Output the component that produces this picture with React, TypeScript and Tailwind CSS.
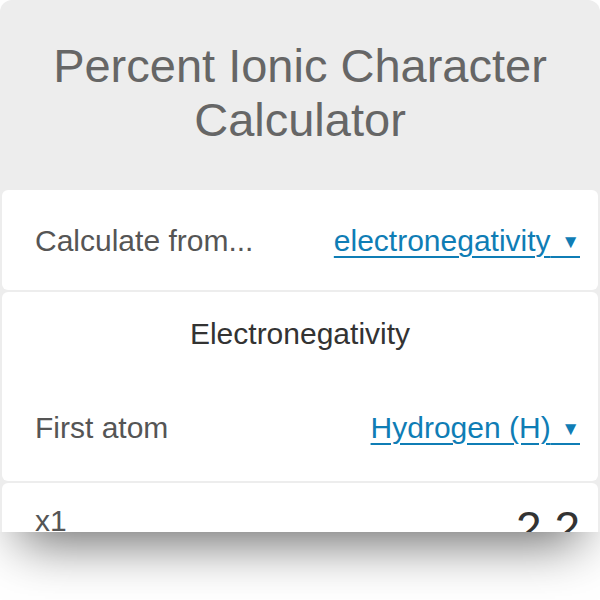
const Caret = () => <span className="text-[19px] align-[3px]">{"\u00a0\u00a0▼"}</span>;

const App = () => {
    return (
        <div className="w-[600px] h-[600px] bg-white overflow-hidden font-['Liberation_Sans',Arial,sans-serif]">
            <div className="relative h-[532px] overflow-hidden rounded-t-[12px] bg-[#ededed] shadow-[0_30px_50px_-20px_rgba(0,0,0,0.6)]">
                <div className="h-[190px] flex items-center justify-center text-center">
                    <h1 className="text-[47px] leading-[54px] text-[#666] -mt-[4px]">
                        Percent Ionic Character
                        <br />
                        Calculator
                    </h1>
                </div>
                <div className="flex flex-col gap-[2px] px-[2px]">
                    <div className="h-[100px] flex items-center justify-between rounded-[6px] bg-white pl-[33px] pr-[18px] text-[30px]">
                        <span className="text-[#555]">Calculate from...</span>
                        <span className="text-[#0f7db5] underline underline-offset-[5px] decoration-[2px]">
                            electronegativity
                            <Caret />
                        </span>
                    </div>
                    <div className="h-[189px] flex flex-col rounded-[6px] bg-white pl-[33px] pr-[18px] text-[30px]">
                        <div className="h-[82px] flex items-center justify-center pr-[15px] text-[#333]">Electronegativity</div>
                        <div className="h-[107px] flex items-center justify-between">
                            <span className="text-[#555]">First atom</span>
                            <span className="text-[#0f7db5] underline underline-offset-[5px] decoration-[2px]">
                                Hydrogen (H)
                                <Caret />
                            </span>
                        </div>
                    </div>
                    <div className="h-[100px] flex items-start justify-between rounded-[6px] bg-white pl-[33px] pr-[18px] pt-[23px]">
                        <span className="text-[30px] leading-[30px] text-[#555]">x1</span>
                        <span className="text-[46px] leading-[46px] text-[#333] -mt-[1px]">2.2</span>
                    </div>
                </div>
            </div>
        </div>
    );
};

export default App;
